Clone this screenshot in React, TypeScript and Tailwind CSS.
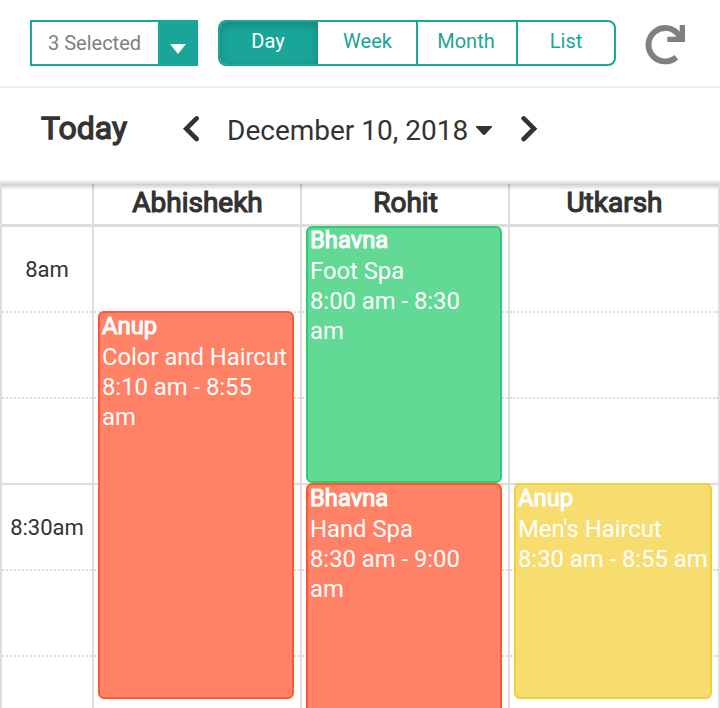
import React from 'react';

const views = ['Day', 'Week', 'Month', 'List'];
const staff = ['Abhishekh', 'Rohit', 'Utkarsh'];
const slots = [
  { label: '8am', solid: true },
  { label: '', solid: false },
  { label: '', solid: false },
  { label: '8:30am', solid: true },
  { label: '', solid: false },
  { label: '', solid: false },
];

const events = [
  {
    name: 'Anup',
    service: 'Color and Haircut',
    time: '8:10 am - 8:55 am',
    style: 'left-[98px] top-[129px] w-[196px] h-[388px] pr-[4px] bg-[#ff8166] border-[#ff5733]',
    nameStyle: '-mt-[2px]',
  },
  {
    name: 'Bhavna',
    service: 'Foot Spa',
    time: '8:00 am - 8:30 am',
    style: 'left-[306px] top-[44px] w-[196px] h-[257px] pr-[4px] bg-[#62d995] border-[#2ecc71]',
    nameStyle: '-mt-[3px]',
  },
  {
    name: 'Bhavna',
    service: 'Hand Spa',
    time: '8:30 am - 9:00 am',
    style: 'left-[306px] top-[301px] w-[196px] h-[258px] pr-[4px] bg-[#ff8166] border-[#ff5733]',
    nameStyle: '-mt-[2px]',
  },
  {
    name: 'Anup',
    service: "Men's Haircut",
    time: '8:30 am - 8:55 am',
    style: 'left-[514px] top-[301px] w-[198px] h-[216px] bg-[#f7dc6f] border-[#f0cf3c]',
    nameStyle: '-mt-[2px]',
  },
];

function Toolbar() {
  return (
    <div className="flex h-[88px] items-start border-b-2 border-[#f1f1f1] pt-5 pl-[30px]">
      <div className="flex h-[46px] w-[168px] border-2 border-[#19a698]">
        <div className="flex-1 pl-4 text-[20px] leading-[42px] whitespace-nowrap text-[#808080]">3 Selected</div>
        <div className="flex w-[38px] justify-end bg-[#19a698] pt-[22px] pr-[10px]">
          <svg width="16" height="10" viewBox="0 0 16 10" fill="#fff">
            <path d="M0 0h16L8 10z" />
          </svg>
        </div>
      </div>
      <div className="ml-5 flex h-[46px] w-[398px] overflow-hidden rounded-[8px] border-2 border-[#19a698]">
        {views.map((view, i) => (
          <div
            key={view}
            className={
              i === 0
                ? 'w-[98px] shrink-0 bg-[#19a698] pr-[2px] text-center text-[20px] leading-[38px] text-white shadow-[inset_0_3px_10px_rgba(0,0,0,0.2)]'
                : i === 1
                  ? 'w-[98px] shrink-0 pl-px text-center text-[20px] leading-[38px] text-[#19a698]'
                  : 'w-[100px] shrink-0 border-l-2 border-[#19a698] pr-[2px] text-center text-[20px] leading-[38px] text-[#19a698]'
            }
          >
            {view}
          </div>
        ))}
      </div>
      <svg className="mt-[4px] ml-[29px]" width="42" height="42" viewBox="0 0 42 42" fill="none">
        <path d="M31.3 33.2A16.7 16.7 0 1 1 33.5 10.6L35.5 14" stroke="#808080" strokeWidth="5.9" />
        <path d="M34.7 1.5q0-.6.6-.6H39.4q.6 0 .6.6V18H22.9q-.6 0-.6-.6V13.3q0-.6.6-.6H34.7z" fill="#808080" />
      </svg>
    </div>
  );
}

function DateBar() {
  return (
    <div className="flex h-[94px] items-start border-b-2 border-[#f1f1f1] text-[#333]">
      <div className="ml-[41px] w-[142px] pt-[20px] text-[32px] leading-[40px] [-webkit-text-stroke:1.3px_#333]">Today</div>
      <svg className="mt-[27px]" width="16" height="28" viewBox="0 0 16 28" fill="none">
        <path d="M13.6 3.4L3.3 13.7l10.3 10.3" stroke="#333" strokeWidth="4.7" strokeLinecap="round" />
      </svg>
      <div className="ml-[28px] w-[249px] pt-[23px] text-[28px] leading-[40px] whitespace-nowrap">December 10, 2018</div>
      <svg className="mt-[38px]" width="16" height="9" viewBox="0 0 16 9" fill="#333">
        <path d="M0 0h16v1L9 8.8H7L0 1z" />
      </svg>
      <svg className="mt-[27px] ml-[29px]" width="17" height="28" viewBox="0 0 17 28" fill="none">
        <path d="M2.7 3.4L13 13.7 2.7 24" stroke="#333" strokeWidth="4.7" strokeLinecap="round" />
      </svg>
    </div>
  );
}

function Calendar() {
  return (
    <div className="relative h-[526px] overflow-hidden">
      <div className="grid grid-cols-[94px_208px_208px_210px] border-t-2 border-b-[3px] border-[#ddd]">
        <div className="h-[40px] border-x-2 border-[#ddd]" />
        {staff.map((name) => (
          <div
            key={name}
            className="h-[40px] border-r-2 border-[#ddd] pl-px text-center text-[28px] leading-[38px] text-[#333] [-webkit-text-stroke:1.2px_#333]"
          >
            {name}
          </div>
        ))}
      </div>
      <div className="absolute top-[2px] right-[2px] left-[2px] h-[6px] bg-linear-to-b from-black/20 to-transparent" />
      {slots.map((slot, i) => (
        <div
          key={i}
          className={
            i === 0
              ? 'grid h-[84px] grid-cols-[94px_208px_208px_210px]'
              : 'grid h-[86px] grid-cols-[94px_208px_208px_210px]'
          }
        >
          <div className="border-x-2 border-[#ddd]">
            <div
              className={
                i === 0
                  ? 'text-center text-[22px] leading-[86px] text-[#333]'
                  : slot.solid
                    ? 'border-t-2 border-[#ddd] text-center text-[22px] leading-[86px] text-[#333]'
                    : 'border-t-2 border-dotted border-[#ddd]'
              }
            >
              {slot.label}
            </div>
          </div>
          {staff.map((name) => (
            <div key={name} className="border-r-2 border-[#ddd]">
              <div
                className={
                  i === 0 ? '' : slot.solid ? 'border-t-2 border-[#ddd]' : 'border-t-2 border-dotted border-[#ddd]'
                }
              />
            </div>
          ))}
        </div>
      ))}
      {events.map((event) => (
        <div
          key={event.service}
          className={'absolute rounded-[6px] border-2 pl-[2px] text-[23.8px] leading-[30px] text-white ' + event.style}
        >
          <div className={'mb-px [-webkit-text-stroke:1px_#fff] ' + event.nameStyle}>{event.name}</div>
          <div className="whitespace-nowrap">{event.service}</div>
          <div>{event.time}</div>
        </div>
      ))}
    </div>
  );
}

export default function App() {
  return (
    <div className="h-[708px] w-[720px] overflow-hidden bg-white font-['Roboto',sans-serif]">
      <Toolbar />
      <DateBar />
      <Calendar />
    </div>
  );
}
